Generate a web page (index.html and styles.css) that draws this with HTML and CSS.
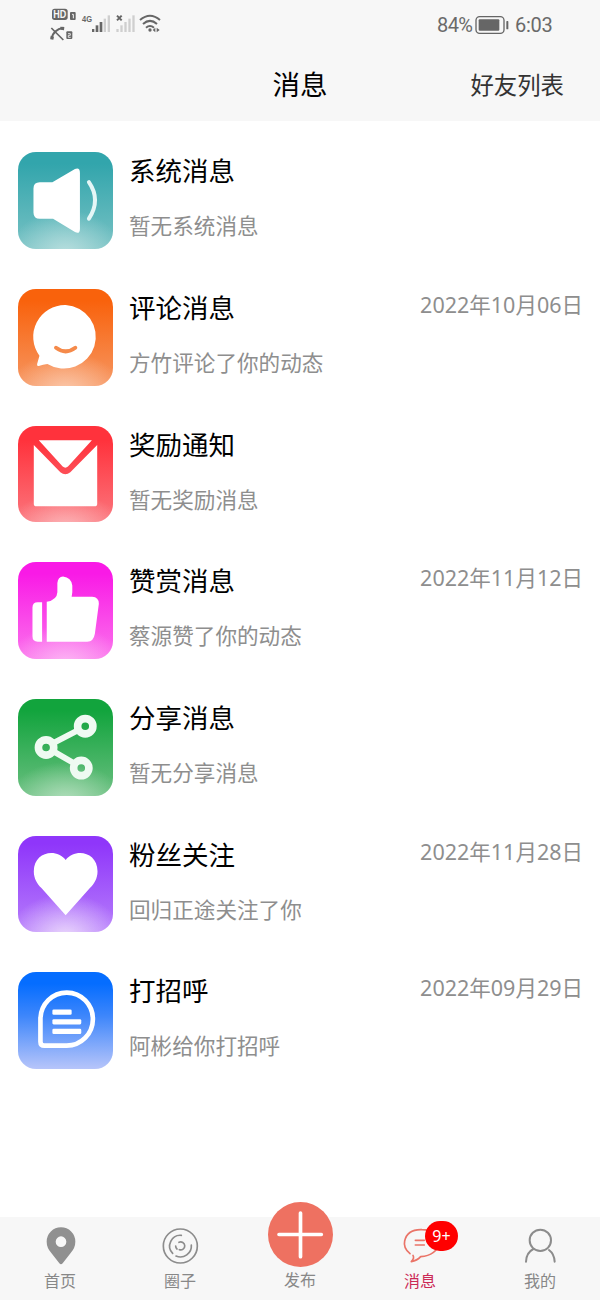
FILE: index.html
```html
<!DOCTYPE html>
<html lang="zh-CN">
<head>
<meta charset="utf-8">
<title>消息</title>
<link rel="stylesheet" href="styles.css">
</head>
<body>
<div class="app">
  <header class="top">
    <div class="status">
      <svg class="signals" viewBox="0 0 390 150" fill="#666">
        <rect x="36" y="26" width="47" height="34" rx="8"/>
        <text x="40" y="54" class="hd" textLength="39" lengthAdjust="spacingAndGlyphs">HD</text>
        <rect x="90" y="36" width="17" height="24" rx="3"/>
        <path d="M96 43h4v12" fill="none" stroke="#f7f7f7" stroke-width="3"/>
        <path d="M34 84l36 36" fill="none" stroke="#666" stroke-width="5"/>
        <path d="M70 83C50 87 38 98 34 116" fill="none" stroke="#666" stroke-width="6"/>
        <path d="M61 80l12 1-1 10-10-2zM32 107l10 3-2 9-9-1z"/>
        <rect x="79" y="94" width="18" height="23" rx="3"/>
        <path d="M84 101h7v5h-6v6h7" fill="none" stroke="#f7f7f7" stroke-width="2.5"/>
        <text x="126" y="67" class="net" textLength="30" lengthAdjust="spacingAndGlyphs">4G</text>
        <rect x="156" y="87" width="7" height="9"/><rect x="167" y="76" width="8" height="20"/><rect x="179" y="66" width="8" height="30"/>
        <g fill="#cfcfcf"><rect x="191" y="56" width="7" height="40"/><rect x="203" y="46" width="7" height="50"/>
        <rect x="229" y="87" width="7" height="9"/><rect x="241" y="76" width="7" height="20"/><rect x="253" y="66" width="7" height="30"/><rect x="265" y="56" width="7" height="40"/><rect x="277" y="46" width="7" height="50"/></g>
        <path d="M231 47l14 14m0-14l-14 14" stroke="#666" stroke-width="6"/>
        <g fill="none" stroke="#666" stroke-width="6"><path d="M300 60Q330 34 360 60"/><path d="M309 72Q330 53 351 72"/><path d="M318 83Q330 73 342 83"/></g>
        <circle cx="330" cy="90" r="5"/>
        <path d="M346 83v14l-8-7zM350 83v14l9-7z"/>
      </svg>
      <div class="power">
        <span class="percent">84%</span>
        <svg class="battery" viewBox="0 0 102 54"><rect x="3" y="2" width="84" height="50" rx="11" fill="none" stroke="#666" stroke-width="4"/><rect x="11" y="10" width="62" height="34" rx="3" fill="#666"/><rect x="94" y="15" width="6" height="25" rx="2" fill="#666"/></svg>
        <span class="clock">6:03</span>
      </div>
    </div>
    <div class="titlebar">
      <h1 class="page-title">消息</h1>
      <a class="friends">好友列表</a>
    </div>
  </header>

  <main class="list">
    <article class="row">
      <svg class="icon system" viewBox="54 36 285 291">
        <path d="M119 127h38l68-40q15-6 15 12v168q0 18-15 10l-66-40h-40q-19 0-19-19v-72q0-19 19-19z" fill="#fff"/>
        <path d="M267 127q37 54 0 110" fill="none" stroke="#e4f6f6" stroke-width="12" stroke-linecap="round"/>
      </svg>
      <div class="text"><h2 class="title">系统消息</h2><p class="sub">暂无系统消息</p></div>
    </article>
    <article class="row">
      <svg class="icon comment" viewBox="54 27 285 291">
        <path d="M197 75a96 96 0 1 1-55 178q-13 1-26 6-7 1-5-6l7-25A96 96 0 0 1 197 75z" fill="#fff"/>
        <path d="M168 204q29 22 58 0" fill="none" stroke="#f58a4a" stroke-width="12" stroke-linecap="round"/>
      </svg>
      <div class="text"><h2 class="title">评论消息</h2><p class="sub">方竹评论了你的动态</p></div>
      <time class="date">2022年10月06日</time>
    </article>
    <article class="row">
      <svg class="icon reward" viewBox="54 33 285 291">
        <path d="M116 76h160l-72 79q-8 7-16 0zM101 90l80 82q15 12 30 0l81-82v177q0 8-8 8H109q-8 0-8-8z" fill="#fff"/>
      </svg>
      <div class="text"><h2 class="title">奖励通知</h2><p class="sub">暂无奖励消息</p></div>
    </article>
    <article class="row">
      <svg class="icon like" viewBox="54 36 285 291">
        <path d="M126 157v119h-13q-16 0-16-16v-87q0-16 16-16zM140 276V156q31-6 32-29V99q2-18 17-19 25 3 28 27v20l-2 14h62q20 1 20 21l-12 90q-4 24-23 24z" fill="#fff"/>
      </svg>
      <div class="text"><h2 class="title">赞赏消息</h2><p class="sub">蔡源赞了你的动态</p></div>
      <time class="date">2022年11月12日</time>
    </article>
    <article class="row">
      <svg class="icon share" viewBox="54 27 285 291">
        <g fill="none" stroke="#effaf2"><path d="M155 162l80-41M155 182l70 40" stroke-width="18"/><g stroke-width="23"><circle cx="256" cy="109" r="23"/><circle cx="138" cy="173" r="23"/><circle cx="244" cy="235" r="23"/></g></g>
      </svg>
      <div class="text"><h2 class="title">分享消息</h2><p class="sub">暂无分享消息</p></div>
    </article>
    <article class="row">
      <svg class="icon fans" viewBox="54 33 285 291">
        <path d="M197 105c28-37 96-25 96 34 0 22-10 38-23 51l-73 82-73-82c-13-13-23-29-23-51 0-59 68-71 96-34z" fill="#fff"/>
      </svg>
      <div class="text"><h2 class="title">粉丝关注</h2><p class="sub">回归正途关注了你</p></div>
      <time class="date">2022年11月28日</time>
    </article>
    <article class="row">
      <svg class="icon hello" viewBox="54 36 285 291">
        <g fill="none" stroke="#fff"><path d="M121 177a79 80 0 1 1 79 81h-67q-12 0-12-12z" stroke-width="14"/></g>
        <g fill="#fff"><rect x="157" y="149" width="58" height="16" rx="4"/><rect x="157" y="178" width="87" height="16" rx="4"/><rect x="157" y="207" width="87" height="16" rx="4"/></g>
      </svg>
      <div class="text"><h2 class="title">打招呼</h2><p class="sub">阿彬给你打招呼</p></div>
      <time class="date">2022年09月29日</time>
    </article>
  </main>

  <nav class="tabs">
    <a class="tab">
      <svg class="tab-icon" viewBox="0 0 120 120"><path d="M63 4a43 43 0 0 1 43 43q0 18-14 34l-24 31q-5 6-10 0L34 81Q20 65 20 47A43 43 0 0 1 63 4zm0 27a16 16 0 1 0 0 32 16 16 0 0 0 0-32z" fill="#909090"/></svg>
      <span>首页</span>
    </a>
    <a class="tab">
      <svg class="tab-icon" viewBox="0 0 120 120" fill="none" stroke="#8c8c8c" stroke-width="5"><circle cx="61" cy="60" r="51"/><path d="M64 28a32 32 0 0 0-26 54M94 57a33 33 0 0 1-46 33" stroke-linecap="round"/><path d="M57 49a12 12 0 1 1 1 22M47 60q0 6 4 9" stroke-linecap="round"/></svg>
      <span>圈子</span>
    </a>
    <a class="tab publish">
      <svg class="plus" viewBox="0 0 195 195"><circle cx="97.500" cy="97.500" r="97.500" fill="#ee7161"/><path d="M97.500 33v131M33 97.500h127" stroke="#fff" stroke-width="11" stroke-linecap="round"/></svg>
      <span>发布</span>
    </a>
    <a class="tab active">
      <span class="icon-wrap">
        <svg class="tab-icon" viewBox="0 0 120 120" fill="none" stroke="#ea7468" stroke-width="5" stroke-linecap="round" stroke-linejoin="round"><path d="M30 83Q9 66 14 45C20 18 42 10 66 11c30 0 50 18 50 40S92 90 62 92q-11 12-28 15 10-11 5-19M46 43h27M46 57h27"/></svg>
        <b class="badge">9+</b>
      </span>
      <span>消息</span>
    </a>
    <a class="tab">
      <svg class="tab-icon" viewBox="0 0 120 120" fill="none" stroke="#8c8c8c" stroke-width="6" stroke-linecap="round"><circle cx="61" cy="43" r="32"/><path d="M18 107q1-27 22-38M104 107q-1-23-17-35"/></svg>
      <span>我的</span>
    </a>
  </nav>
</div>
</body>
</html>
```

FILE: styles.css
```css
* { box-sizing: border-box; margin: 0; padding: 0; }
body { background: #fff; font-family: "Noto Sans", "Noto Sans CJK SC", sans-serif; }
.app { width: 600px; height: 1300px; display: flex; flex-direction: column; overflow: hidden; }
.top { height: 121px; background: #f7f7f7; flex: none; }
.status { height: 50px; display: flex; justify-content: space-between; padding: 0 48px 0 40px; }
.signals { width: 130px; height: 50px; }
.hd { font: bold 32px "Liberation Sans", sans-serif; fill: #f7f7f7; }
.net { font: bold 29px "Liberation Sans", sans-serif; }
.power { display: flex; align-items: center; height: 49px; font: 20px Roboto, sans-serif; color: #6a6a6a; }
.percent { width: 37px; letter-spacing: -0.6px; }
.battery { width: 34px; height: 18px; margin: 0 6px 0 1px; }
.clock { width: 37px; letter-spacing: -0.3px; }
.titlebar { height: 69px; display: grid; grid-template-columns: 1fr auto 1fr; align-items: center; padding-right: 36px; padding-left: 36px; }
.page-title { grid-column: 2; font-size: 27.500px; line-height: 40px; font-weight: 400; color: #000; }
.friends { justify-self: end; font-size: 23.400px; line-height: 40px; color: #333; }

.list { flex: 1; padding: 31.400px 17px 0 18px; }
.row { display: flex; height: 136.670px; }
.icon { width: 95px; height: 96.600px; border-radius: 18px; flex: none; }
.system { background: radial-gradient(ellipse 60% 45% at 50% 105%, #b9dfdf, #b9dfdf00), linear-gradient(#32a5ac 12%, #78c2c4); }
.comment { background: radial-gradient(ellipse 60% 40% at 50% 105%, #fbc7a9, #fbc7a900), linear-gradient(#f9620c 12%, #f69661); }
.reward { background: radial-gradient(ellipse 60% 35% at 50% 105%, #fcb4b7, #fcb4b700), linear-gradient(#ff323c 15%, #fb767d); }
.like { background: radial-gradient(ellipse 60% 40% at 50% 105%, #fcb6f4, #fcb6f400), linear-gradient(#f91ae6 12%, #fb73ec); }
.share { background: radial-gradient(ellipse 60% 40% at 50% 105%, #b0debb, #b0debb00), linear-gradient(#12a43d 12%, #6abf80); }
.fans { background: radial-gradient(ellipse 60% 45% at 50% 105%, #ead7fc, #ead7fc00), linear-gradient(#8f36fa 8%, #b67dfb); }
.hello { background: linear-gradient(#056dff 12%, #3d86fb 45%, #b7c5fa); }
.text { flex: 1; padding: 0 0 0 16px; }
.title { font-size: 26.500px; line-height: 38px; font-weight: 400; color: #000; }
.sub { font-size: 21.600px; line-height: 32px; margin-top: 20px; color: #8e8e8e; }
.date { font-size: 21.500px; line-height: 32px; color: #8e8e8e; white-space: nowrap; }

.tabs { height: 83px; background: #f7f7f7; display: grid; grid-template-columns: repeat(5, 1fr); flex: none; }
.tab { display: flex; flex-direction: column; align-items: center; padding-top: 9px; font-size: 16px; line-height: 22px; color: #888; }
.tab-icon { width: 40px; height: 40px; display: block; margin-bottom: 4px; }
.publish { padding-top: 0; margin-top: -15px; }
.plus { width: 65px; height: 65px; margin-bottom: 2px; }
.icon-wrap { position: relative; }
.active { color: #cb2a56; }
.badge { position: absolute; left: 25px; top: -5px; width: 33px; height: 30px; border-radius: 15px; background: #f00; color: #fff; font-size: 16px; line-height: 30px; font-weight: 400; text-align: center; }
```
